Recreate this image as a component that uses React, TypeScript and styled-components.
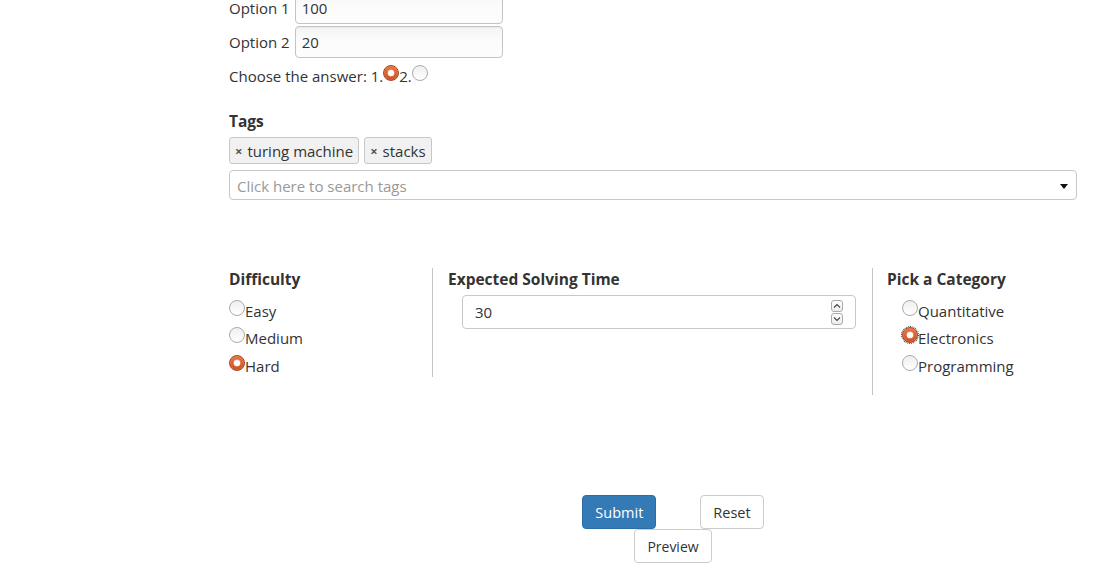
import React from "react";
import styled, { createGlobalStyle, css } from "styled-components";

const Global = createGlobalStyle`
  html, body { margin: 0; padding: 0; background: #fff; }
  body { font-family: "Open Sans", "Noto Sans", sans-serif; font-size: 15px; color: #333; overflow: hidden; }
  * { box-sizing: border-box; }
`;

const Page = styled.div`
  width: 1117px;
  height: 587px;
  overflow: hidden;
`;

const Main = styled.div`
  margin-left: 229px;
  margin-top: -8px;
  width: 848px;
  display: flex;
  flex-direction: column;
`;

const OptionRow = styled.div`
  display: flex;
  align-items: center;
  gap: 5px;
  height: 32px;
  margin-bottom: 2px;
`;

const TextInput = styled.div`
  width: 208px;
  height: 32px;
  border: 1px solid #c4c4c4;
  border-radius: 4px;
  background: linear-gradient(#f4f4f4, #fbfbfb 40%, #fdfdfd);
  box-shadow: inset 0 1px 1px rgba(0, 0, 0, 0.04);
  padding: 0 6px;
  display: flex;
  align-items: center;
  color: #333;
`;

const ChooseRow = styled.div`
  display: flex;
  align-items: center;
  height: 28px;
  margin-top: 2px;
`;

const Radio = styled.span<{ $checked?: boolean; $focus?: boolean }>`
  display: inline-block;
  width: 16px;
  height: 16px;
  border-radius: 50%;
  flex: none;
  position: relative;
  top: -3px;
  ${(p) =>
    p.$checked
      ? css`
          background: linear-gradient(#e9733f, #c94d20);
          border: 1px solid #a9441f;
          box-shadow: inset 0 0 2px rgba(255, 200, 170, 0.6);
          &::after {
            content: "";
            position: absolute;
            left: 50%;
            top: 50%;
            width: 6px;
            height: 6px;
            margin: -3px 0 0 -3px;
            border-radius: 50%;
            background: #fff;
            box-shadow: 0 0 1px 0.5px rgba(255, 230, 215, 0.7);
          }
        `
      : css`
          background: linear-gradient(#efefef, #ffffff);
          border: 1px solid #aaaaaa;
        `}
  ${(p) =>
    p.$focus &&
    css`
      outline: 1px dotted #333;
      outline-offset: 0px;
    `}
`;

const Heading = styled.div`
  font-weight: 700;
  font-size: 15.5px;
  color: #333;
  line-height: 22px;
`;

const TagsHeading = styled(Heading)`
  margin-top: 20px;
`;

const TagList = styled.div`
  display: flex;
  gap: 5px;
  margin-top: 5px;
`;

const Tag = styled.div`
  height: 27px;
  border: 1px solid #c8c8c8;
  border-radius: 3px;
  background: #f1f1f1;
  padding: 0 5px 0 5px;
  display: flex;
  align-items: center;
  gap: 5px;
  color: #333;
`;

const TagX = styled.span`
  font-size: 13px;
  color: #555;
  font-weight: 700;
`;

const Select = styled.div`
  margin-top: 6px;
  height: 30px;
  border: 1px solid #c8c8c8;
  border-radius: 4px;
  display: flex;
  align-items: center;
  justify-content: space-between;
  padding: 1px 8px 0 7px;
  color: #999;
`;

const Caret = styled.span`
  width: 0;
  height: 0;
  border-left: 4px solid transparent;
  border-right: 4px solid transparent;
  border-top: 5px solid #111;
  margin-top: 2px;
`;

const Columns = styled.div`
  display: flex;
  align-items: flex-start;
  margin-top: 68px;
`;

const Col = styled.div<{ $w: number; $h: number; $pl: number }>`
  width: ${(p) => p.$w}px;
  height: ${(p) => p.$h}px;
  padding-left: ${(p) => p.$pl}px;
  display: flex;
  flex-direction: column;
`;

const LeftCol = styled(Col)`
  border-right: 1px solid #c4c4c4;
`;

const RightCol = styled(Col)`
  border-left: 1px solid #c4c4c4;
`;

const RadioList = styled.div<{ $indent: number }>`
  display: flex;
  flex-direction: column;
  padding-left: ${(p) => p.$indent}px;
  margin-top: 7px;
`;

const RadioItem = styled.div`
  display: flex;
  align-items: center;
  height: 27.5px;
  line-height: 20px;
`;

const NumberInput = styled.div`
  margin: 5px 0 0 14px;
  width: 394px;
  height: 34px;
  border: 1px solid #c8c8c8;
  border-radius: 4px;
  display: flex;
  align-items: center;
  justify-content: space-between;
  padding: 0 12px 0 12px;
`;

const Spinner = styled.div`
  display: flex;
  flex-direction: column;
  gap: 1px;
`;

const SpinBtn = styled.span`
  width: 12px;
  height: 12px;
  border: 1px solid #aaa;
  border-radius: 3px;
  background: linear-gradient(#fff, #ececec);
  display: flex;
  align-items: center;
  justify-content: center;
`;

const ButtonArea = styled.div`
  margin-top: 100px;
  margin-right: -40px;
  display: flex;
  flex-direction: column;
  align-items: center;
`;

const ButtonRow = styled.div`
  display: flex;
  gap: 44px;
`;

const Button = styled.div<{ $primary?: boolean }>`
  height: 34px;
  padding: 0 12px;
  border-radius: 4px;
  display: flex;
  align-items: center;
  font-size: 14.5px;
  ${(p) =>
    p.$primary
      ? css`
          background: #337ab7;
          border: 1px solid #2e6da4;
          color: #fff;
        `
      : css`
          background: #fff;
          border: 1px solid #ccc;
          color: #333;
        `}
`;

const PreviewButton = styled(Button)`
  font-size: 14px;
`;

const Chevron = ({ up }: { up?: boolean }) => (
  <svg width="8" height="6" viewBox="0 0 8 6">
    <path
      d={up ? "M1 4.5 L4 1.5 L7 4.5" : "M1 1.5 L4 4.5 L7 1.5"}
      fill="none"
      stroke="#444"
      strokeWidth="1.1"
    />
  </svg>
);

export default function App() {
  return (
    <Page>
      <Global />
      <Main>
        <OptionRow>
          Option 1<TextInput>100</TextInput>
        </OptionRow>
        <OptionRow>
          Option 2<TextInput>20</TextInput>
        </OptionRow>
        <ChooseRow>
          Choose the answer: 1.<Radio $checked />2.<Radio />
        </ChooseRow>
        <TagsHeading>Tags</TagsHeading>
        <TagList>
          <Tag>
            <TagX>×</TagX>turing machine
          </Tag>
          <Tag>
            <TagX>×</TagX>stacks
          </Tag>
        </TagList>
        <Select>
          Click here to search tags
          <Caret />
        </Select>
        <Columns>
          <LeftCol $w={204} $h={109} $pl={0}>
            <Heading>Difficulty</Heading>
            <RadioList $indent={0}>
              <RadioItem>
                <Radio />Easy
              </RadioItem>
              <RadioItem>
                <Radio />Medium
              </RadioItem>
              <RadioItem>
                <Radio $checked />Hard
              </RadioItem>
            </RadioList>
          </LeftCol>
          <Col $w={439} $h={109} $pl={15}>
            <Heading>Expected Solving Time</Heading>
            <NumberInput>
              30
              <Spinner>
                <SpinBtn>
                  <Chevron up />
                </SpinBtn>
                <SpinBtn>
                  <Chevron />
                </SpinBtn>
              </Spinner>
            </NumberInput>
          </Col>
          <RightCol $w={205} $h={127} $pl={14}>
            <Heading>Pick a Category</Heading>
            <RadioList $indent={15}>
              <RadioItem>
                <Radio />Quantitative
              </RadioItem>
              <RadioItem>
                <Radio $checked $focus />Electronics
              </RadioItem>
              <RadioItem>
                <Radio />Programming
              </RadioItem>
            </RadioList>
          </RightCol>
        </Columns>
        <ButtonArea>
          <ButtonRow>
            <Button $primary>Submit</Button>
            <Button>Reset</Button>
          </ButtonRow>
          <PreviewButton>Preview</PreviewButton>
        </ButtonArea>
      </Main>
    </Page>
  );
}
